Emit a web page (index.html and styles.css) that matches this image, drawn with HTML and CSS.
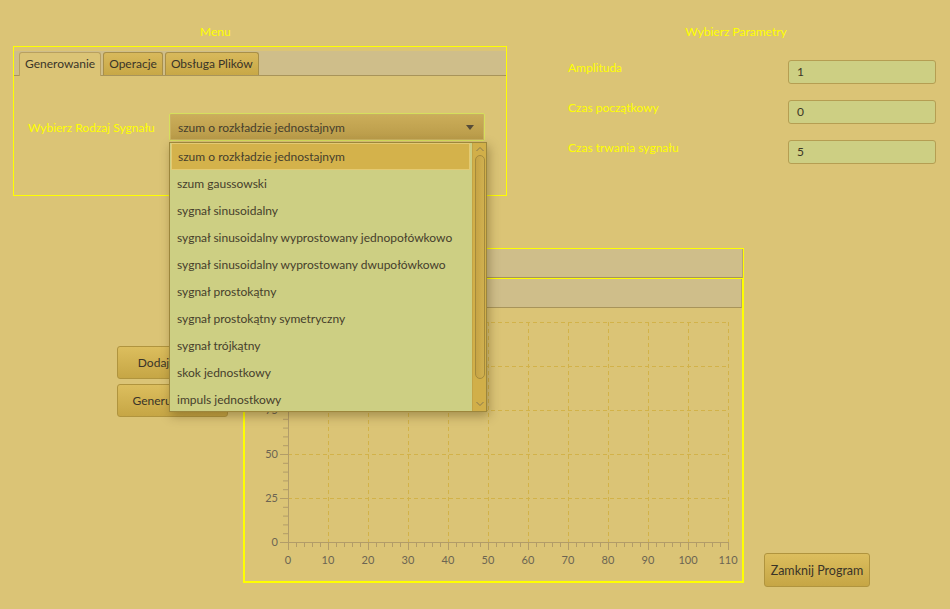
FILE: index.html
```html
<!DOCTYPE html>
<html lang="pl">
<head>
<meta charset="utf-8">
<title>Generator sygnałów</title>
<link rel="stylesheet" href="styles.css">
</head>
<body>
<div class="app">
  <div class="top">
    <section class="menu-sec">
      <div class="sec-title menu-title">Menu</div>
      <div class="menu-box">
        <div class="tab-header">
          <div class="tab active">Generowanie</div>
          <div class="tab">Operacje</div>
          <div class="tab">Obsługa Plików</div>
        </div>
        <div class="tab-content">
          <div class="signal-row">
            <span class="ylabel signal-label">Wybierz Rodzaj Sygnału</span>
            <div class="combo-wrap">
              <div class="combo">
                <span>szum o rozkładzie jednostajnym</span>
                <span class="arrow"></span>
              </div>
              <div class="popup">
                <ul class="list">
                  <li class="selected">szum o rozkładzie jednostajnym</li>
                  <li>szum gaussowski</li>
                  <li>sygnał sinusoidalny</li>
                  <li>sygnał sinusoidalny wyprostowany jednopołówkowo</li>
                  <li>sygnał sinusoidalny wyprostowany dwupołówkowo</li>
                  <li>sygnał prostokątny</li>
                  <li>sygnał prostokątny symetryczny</li>
                  <li>sygnał trójkątny</li>
                  <li>skok jednostkowy</li>
                  <li>impuls jednostkowy</li>
                </ul>
                <div class="scrollbar">
                  <svg class="sb-arrow" width="14" height="8" viewBox="0 0 14 8"><path d="M3.5 6 L7 2.5 L10.5 6" fill="none" stroke="#8a7a50" stroke-width="1"/></svg>
                  <div class="thumb"></div>
                  <svg class="sb-arrow" width="14" height="8" viewBox="0 0 14 8"><path d="M3.5 2 L7 5.5 L10.5 2" fill="none" stroke="#8a7a50" stroke-width="1"/></svg>
                </div>
              </div>
            </div>
          </div>
        </div>
      </div>
    </section>
    <section class="params">
      <div class="sec-title params-title">Wybierz Parametry</div>
      <div class="param-row">
        <span class="ylabel param-label">Amplituda</span>
        <div class="field">1</div>
      </div>
      <div class="param-row">
        <span class="ylabel param-label">Czas początkowy</span>
        <div class="field">0</div>
      </div>
      <div class="param-row">
        <span class="ylabel param-label">Czas trwania sygnału</span>
        <div class="field">5</div>
      </div>
    </section>
  </div>
  <div class="lower">
    <div class="btns">
      <div class="btn side-btn">Dodaj Sygnał</div>
      <div class="btn side-btn">Generuj Sygnał</div>
    </div>
    <div class="chart-wrap">
      <div class="pane1"><div class="pane-hdr"></div></div>
      <div class="pane2">
        <div class="pane-hdr pane-hdr2"></div>
        <svg class="chart" width="497" height="273" viewBox="0 0 497 273">
          <g class="grid" stroke="#d2b249" stroke-width="1" stroke-dasharray="4 3" fill="none">
            <path d="M83.5 14 V234 M123.5 14 V234 M163.5 14 V234 M203.5 14 V234 M243.5 14 V234 M283.5 14 V234 M323.5 14 V234 M363.5 14 V234 M403.5 14 V234 M443.5 14 V234 M483.5 14 V234"/>
            <path d="M43 190.5 H484 M43 146.5 H484 M43 102.5 H484 M43 58.5 H484 M43 14.5 H484"/>
          </g>
          <g stroke="#b29c68" stroke-width="1" fill="none">
            <path d="M43.5 14 V234.5 H484"/>
            <path d="M43.5 234 V242 M83.5 234 V242 M123.5 234 V242 M163.5 234 V242 M203.5 234 V242 M243.5 234 V242 M283.5 234 V242 M323.5 234 V242 M363.5 234 V242 M403.5 234 V242 M443.5 234 V242 M483.5 234 V242"/>
            <path d="M51.5 234 V239 M59.5 234 V239 M67.5 234 V239 M75.5 234 V239 M91.5 234 V239 M99.5 234 V239 M107.5 234 V239 M115.5 234 V239 M131.5 234 V239 M139.5 234 V239 M147.5 234 V239 M155.5 234 V239 M171.5 234 V239 M179.5 234 V239 M187.5 234 V239 M195.5 234 V239 M211.5 234 V239 M219.5 234 V239 M227.5 234 V239 M235.5 234 V239 M251.5 234 V239 M259.5 234 V239 M267.5 234 V239 M275.5 234 V239 M291.5 234 V239 M299.5 234 V239 M307.5 234 V239 M315.5 234 V239 M331.5 234 V239 M339.5 234 V239 M347.5 234 V239 M355.5 234 V239 M371.5 234 V239 M379.5 234 V239 M387.5 234 V239 M395.5 234 V239 M411.5 234 V239 M419.5 234 V239 M427.5 234 V239 M435.5 234 V239 M451.5 234 V239 M459.5 234 V239 M467.5 234 V239 M475.5 234 V239"/>
            <path d="M35 234.5 H43 M35 190.5 H43 M35 146.5 H43 M35 102.5 H43 M35 58.5 H43 M35 14.5 H43"/>
            <path d="M38 225.7 H43 M38 216.9 H43 M38 208.1 H43 M38 199.3 H43 M38 181.7 H43 M38 172.9 H43 M38 164.1 H43 M38 155.3 H43 M38 137.7 H43 M38 128.9 H43 M38 120.1 H43 M38 111.3 H43 M38 93.7 H43 M38 84.9 H43 M38 76.1 H43 M38 67.3 H43 M38 49.7 H43 M38 40.9 H43 M38 32.1 H43 M38 23.3 H43"/>
          </g>
          <g class="ticklabels" fill="#6c6452">
            <text x="43" y="256" text-anchor="middle">0</text>
            <text x="83" y="256" text-anchor="middle">10</text>
            <text x="123" y="256" text-anchor="middle">20</text>
            <text x="163" y="256" text-anchor="middle">30</text>
            <text x="203" y="256" text-anchor="middle">40</text>
            <text x="243" y="256" text-anchor="middle">50</text>
            <text x="283" y="256" text-anchor="middle">60</text>
            <text x="323" y="256" text-anchor="middle">70</text>
            <text x="363" y="256" text-anchor="middle">80</text>
            <text x="403" y="256" text-anchor="middle">90</text>
            <text x="443" y="256" text-anchor="middle">100</text>
            <text x="483" y="256" text-anchor="middle">110</text>
            <text x="33" y="238" text-anchor="end">0</text>
            <text x="33" y="194" text-anchor="end">25</text>
            <text x="33" y="150" text-anchor="end">50</text>
            <text x="33" y="106" text-anchor="end">75</text>
            <text x="33" y="62" text-anchor="end">100</text>
            <text x="33" y="18" text-anchor="end">125</text>
          </g>
        </svg>
      </div>
    </div>
    <div class="btn close-btn">Zamknij Program</div>
  </div>
</div>
</body>
</html>
```

FILE: styles.css
```css
* { box-sizing: border-box; }
html, body { margin: 0; padding: 0; }
body {
  width: 950px;
  height: 609px;
  overflow: hidden;
  background: #dbc476;
  font-family: "Lato", "Noto Sans", sans-serif;
  font-size: 12px;
  color: #3c3626;
}
.app { width: 950px; height: 609px; }
.top { display: flex; padding-top: 24px; }

.sec-title { height: 16px; line-height: 16px; color: #ffff00; font-size: 12px; }
.ylabel { color: #ffff00; font-size: 12px; }

.menu-sec { margin-left: 13px; width: 494px; }
.menu-title { padding-left: 187px; margin-bottom: 6px; }
.menu-box {
  height: 150px;
  border: 1px solid #ffff00;
  padding-top: 4px;
}
.tab-header {
  height: 25px;
  background: #cfbe8a;
  border-bottom: 1px solid #a8945a;
  display: flex;
  align-items: flex-end;
  padding-left: 5px;
  gap: 2px;
}
.tab {
  height: 23px;
  line-height: 21px;
  padding: 0 5px;
  border: 1px solid #a88f48;
  border-bottom: none;
  border-radius: 3px 3px 0 0;
  background: linear-gradient(#d8b95c, #c8a846);
  color: #3a3428;
  white-space: nowrap;
}
.tab.active {
  background: #dbc476;
  height: 24px;
  margin-bottom: -1px;
  border-color: #b8a060;
}
.tab-content { padding: 37px 0 0 14px; }
.signal-row { display: flex; align-items: center; }
.signal-label { width: 141px; flex: none; }

.combo-wrap { position: relative; }
.combo {
  width: 316px;
  height: 28px;
  border: 1px solid #d6e05c;
  border-radius: 2px;
  box-shadow: inset 0 0 0 1px #c9b060;
  background: linear-gradient(#ccae5a, #b89a48);
  display: flex;
  align-items: center;
  justify-content: space-between;
  padding: 0 10px 0 8px;
  color: #463e2c;
}
.arrow {
  width: 0; height: 0;
  border-left: 4px solid transparent;
  border-right: 4px solid transparent;
  border-top: 5px solid #564c38;
  margin-top: 1px;
}
.popup {
  position: absolute;
  top: 29px;
  left: 0;
  width: 318px;
  height: 270px;
  border: 1px solid #9c863c;
  background: #cdcf83;
  display: flex;
  box-shadow: 2px 4px 10px rgba(60, 40, 0, 0.35);
  z-index: 10;
}
.list { list-style: none; margin: 0; padding: 0; flex: 1; }
.list li {
  height: 27px;
  line-height: 27px;
  padding-left: 7px;
  color: #463e2c;
  white-space: nowrap;
}
.list li.selected {
  background: #d4b24b;
  border: 1px solid #e4ca72;
  line-height: 25px;
  padding-left: 6px;
  margin: 0 2px 0 1px;
}
.scrollbar {
  width: 14px;
  background: #d1af49;
  border-left: 1px solid #c4a444;
  display: flex;
  flex-direction: column;
  align-items: center;
}
.sb-arrow { flex: none; margin-top: 2px; }
.thumb {
  width: 10px;
  height: 224px;
  margin: 2px 0 auto;
  border: 1px solid #a48a3c;
  border-radius: 5px;
  background: linear-gradient(90deg, #c6a446, #d0b050);
}
.scrollbar .sb-arrow:last-child { margin: 0 0 3px; }

.params { margin-left: 15px; width: 428px; }
.params-title { text-align: center; margin-bottom: 20px; }
.param-row { display: flex; align-items: flex-start; padding-left: 46px; margin-bottom: 16px; }
.param-label { width: 220px; line-height: 16px; }
.field {
  width: 148px;
  height: 24px;
  line-height: 22px;
  padding-left: 8px;
  background: #cdcf83;
  border: 1px solid #b59e52;
  border-radius: 3px;
  color: #3c3626;
  font-size: 12px;
}

.lower { display: flex; align-items: flex-start; padding-left: 117px; }
.btn {
  border: 1px solid #b0943e;
  border-radius: 3px;
  background: linear-gradient(#dcbe5e, #c6a645);
  color: #3a3428;
  display: flex;
  align-items: center;
  justify-content: center;
  white-space: nowrap;
}
.btns { margin-top: 150px; width: 111px; display: flex; flex-direction: column; gap: 5px; }
.side-btn { height: 33px; }
.chart-wrap { margin-left: 15px; margin-top: 52px; width: 501px; }
.pane1 { height: 30px; border: 1px solid #ffff00; border-bottom: none; }
.pane-hdr {
  height: 29px;
  background: #cfbe8a;
  border-bottom: 1px solid #a8945a;
  border-right: 1px solid #b8a570;
}
.pane2 { border: 2px solid #ffff00; border-top: 1px solid #ffff00; }
.pane-hdr2 { height: 29px; }
.chart { display: block; }
.ticklabels { font-family: "Lato", "Noto Sans", sans-serif; font-size: 11px; }
.close-btn { margin-left: 20px; margin-top: 357px; width: 106px; height: 34px; font-size: 12.5px; }
```
